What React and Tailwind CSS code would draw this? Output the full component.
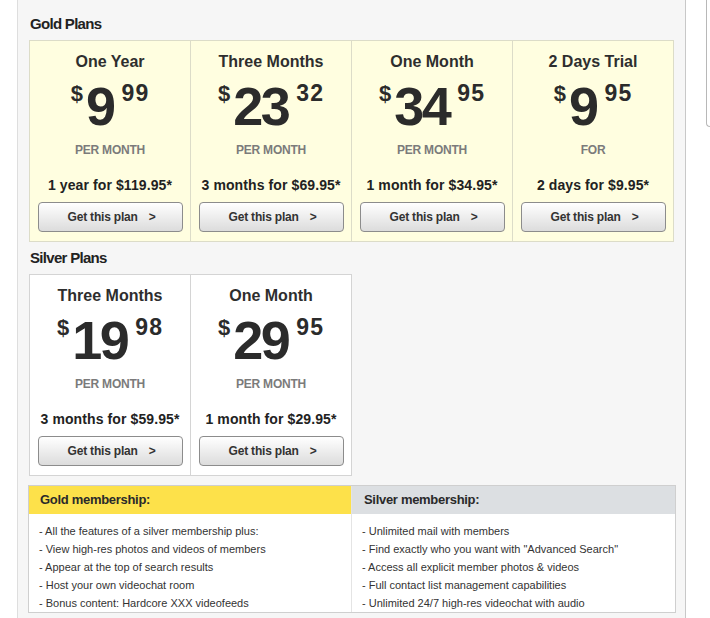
import React from 'react'

const goldPlans = [
  { title: 'One Year', dollars: '9', cents: '99', unit: 'PER MONTH', total: '1 year for $119.95*' },
  { title: 'Three Months', dollars: '23', cents: '32', unit: 'PER MONTH', total: '3 months for $69.95*' },
  { title: 'One Month', dollars: '34', cents: '95', unit: 'PER MONTH', total: '1 month for $34.95*' },
  { title: '2 Days Trial', dollars: '9', cents: '95', unit: 'FOR', total: '2 days for $9.95*' },
]

const silverPlans = [
  { title: 'Three Months', dollars: '19', cents: '98', unit: 'PER MONTH', total: '3 months for $59.95*' },
  { title: 'One Month', dollars: '29', cents: '95', unit: 'PER MONTH', total: '1 month for $29.95*' },
]

const goldFeatures = [
  '- All the features of a silver membership plus:',
  '- View high-res photos and videos of members',
  '- Appear at the top of search results',
  '- Host your own videochat room',
  '- Bonus content: Hardcore XXX videofeeds',
]

const silverFeatures = [
  '- Unlimited mail with members',
  '- Find exactly who you want with "Advanced Search"',
  '- Access all explicit member photos & videos',
  '- Full contact list management capabilities',
  '- Unlimited 24/7 high-res videochat with audio',
]

function PlanCell({ plan, gold }) {
  return (
    <div
      className={
        'w-[161px] border-r flex flex-col items-center pt-[11px] pb-[9px] ' +
        (gold ? 'bg-[#fffee0] border-[#dcdcc8]' : 'bg-white border-[#d4d4d4]')
      }
    >
      <div className="text-[16px] leading-[20px] font-bold text-[#2e2e2e]">{plan.title}</div>
      <div className="mt-[7px] flex items-start justify-center text-[#2b2b2b] font-bold">
        <span className="text-[22px] leading-none mt-[4px] mr-[3px]">$</span>
        <span className="text-[54px] leading-none tracking-[-2.5px]">{plan.dollars}</span>
        <span className="text-[23px] leading-none mt-[3px] ml-[8px] tracking-[1px]">{plan.cents}</span>
      </div>
      <div className="mt-[9px] text-[12px] leading-[16px] font-bold text-[#7b7b7b] tracking-[-0.2px]">
        {plan.unit}
      </div>
      <div className="mt-[19px] text-[14px] leading-[16px] font-bold text-[#222] tracking-[0.1px]">
        {plan.total}
      </div>
      <button className="mt-[9px] w-[145px] h-[30px] rounded-[4px] border border-[#8c8c8c] bg-gradient-to-b from-white to-[#dcdcdc] flex items-center justify-center text-[12px] font-bold text-[#333] tracking-[-0.2px] pl-[3px]">
        <span>Get this plan</span>
        <span className="ml-[11px]">&gt;</span>
      </button>
    </div>
  )
}

function Heading({ children, className = '' }) {
  return (
    <div className={'text-[15px] leading-[20px] font-bold text-[#222] tracking-[-0.7px] pl-[1px] ' + className}>
      {children}
    </div>
  )
}

export default function App() {
  return (
    <div className="w-[710px] h-[618px] overflow-hidden bg-white flex font-['Liberation_Sans',Arial,sans-serif]">
      <div className="ml-[17px] w-[670px] h-full border-l border-r border-l-[#dedede] border-r-[#c8c8c8] bg-[#f6f6f6] pl-[11px] pt-[14px]">
        <Heading>Gold Plans</Heading>
        <div className="mt-[6px] flex w-fit border-l border-t border-b border-[#dcdcc8]">
          {goldPlans.map((p) => (
            <PlanCell key={p.title} plan={p} gold />
          ))}
        </div>

        <Heading className="mt-[6px]">Silver Plans</Heading>
        <div className="mt-[6px] flex w-fit border-l border-t border-b border-[#d4d4d4]">
          {silverPlans.map((p) => (
            <PlanCell key={p.title} plan={p} />
          ))}
        </div>

        <div className="mt-[9px] -ml-[1px] w-[648px] border border-[#cfcfcf] bg-white flex">
          <div className="w-[323px] border-r border-[#e4e4e4]">
            <div className="h-[28px] bg-[#fde14a] flex items-center pl-[11px] text-[13px] font-bold text-[#2a2a2a] tracking-[-0.3px]">
              Gold membership:
            </div>
            <ul className="pt-[8px] pl-[10px] text-[11px] leading-[18px] text-[#333]">
              {goldFeatures.map((f) => (
                <li key={f}>{f}</li>
              ))}
            </ul>
          </div>
          <div className="flex-1">
            <div className="h-[28px] bg-[#dcdfe2] flex items-center pl-[12px] text-[13px] font-bold text-[#2a2a2a] tracking-[-0.3px]">
              Silver membership:
            </div>
            <ul className="pt-[8px] pl-[10px] text-[11px] leading-[18px] text-[#333]">
              {silverFeatures.map((f) => (
                <li key={f}>{f}</li>
              ))}
            </ul>
          </div>
        </div>
      </div>
      <div className="ml-[20px] w-[4px] h-[127px] border-l border-b border-[#b8b8b8] rounded-bl-[6px]" />
    </div>
  )
}
